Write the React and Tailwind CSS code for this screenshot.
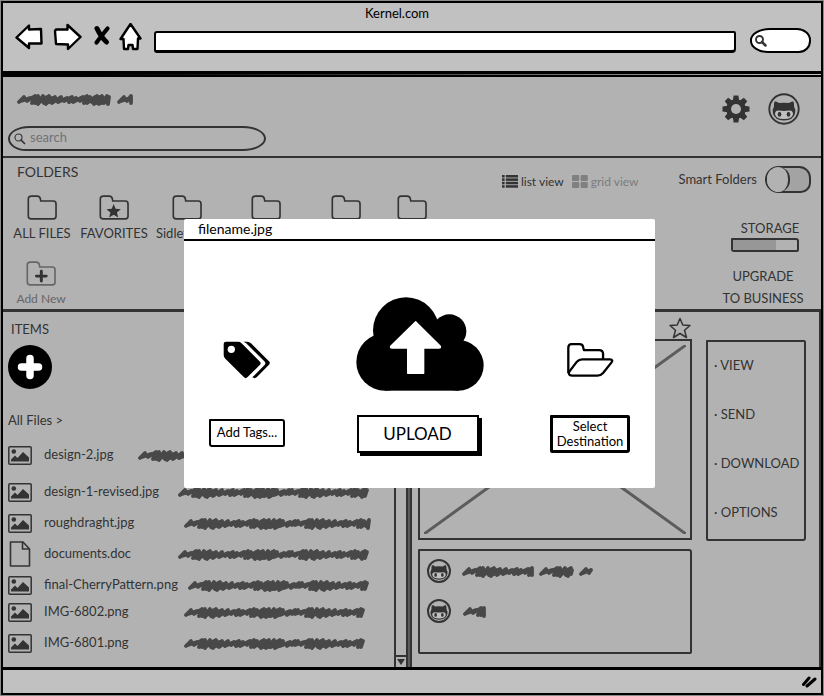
import React from "react";

/* ---------- hand-drawn scribble standing in for text ---------- */

/* Each stroke: distance to the next one, top of the stroke, bottom of the stroke. */
const STROKES = [
  [3, 4, 8], [6, 5, 8], [5, 3, 10], [3, 3, 10], [3, 5, 11], [2, 3, 9], [4, 4, 10], [2, 3, 11], [3, 5, 9], [3, 4, 10],
  [6, 4, 9], [6, 5, 8], [5, 4, 9], [4, 5, 9], [7, 4, 8], [4, 3, 10], [3, 4, 10], [5, 4, 9], [2, 3, 11], [3, 4, 10],
  [2, 3, 11], [3, 5, 10], [2, 3, 10], [4, 4, 11], [2, 3, 10], [3, 4, 9], [7, 5, 9], [5, 4, 8],
];

function scribblePath(from, to) {
  let x = from;
  let i = 0;
  let d = `M${from + 2} 9`;
  while (x < to - 5) {
    const [step, top, bottom] = STROKES[i % STROKES.length];
    x += step;
    const up = Math.min(x + 4, to - 2);
    d += `L${up} ${top}L${Math.min(x + 1, to - 2)} ${bottom}`;
    i += 1;
  }
  return d;
}

function Scribble({ words, className = "" }) {
  const width = words[words.length - 1][1];
  return (
    <svg width={width} height="13" viewBox={`0 0 ${width} 13`} className={`shrink-0 ${className}`} aria-hidden="true">
      {words.map(([a, b]) => (
        <path key={a} d={scribblePath(a, b)} fill="none" stroke="#484848" strokeWidth="3.8" strokeLinejoin="round" strokeLinecap="round" />
      ))}
    </svg>
  );
}

/* ---------- icons ---------- */

function BackArrow() {
  return (
    <svg width="28" height="30" viewBox="0 0 28 30" fill="white" stroke="black" strokeWidth="2.4" strokeLinejoin="round">
      <path d="M1.5 14.5 14 2.5V6.5L26 6 26.500 20.500 14 20.500V25Z" />
    </svg>
  );
}

function ForwardArrow() {
  return (
    <svg width="29" height="30" viewBox="0 0 29 30" fill="white" stroke="black" strokeWidth="2.4" strokeLinejoin="round">
      <path d="M2 8 3 6.500 14.500 6.500V2L27.500 14 15 26V21.500L3 21Z" />
    </svg>
  );
}

function StopIcon() {
  return (
    <svg width="18" height="30" viewBox="0 0 18 30" fill="none" stroke="black" strokeLinecap="round">
      <path d="M4 5.500Q8 14 13.500 19" strokeWidth="5" />
      <path d="M14.500 5.500Q10 11 3.500 19.500" strokeWidth="4.200" />
    </svg>
  );
}

function HomeIcon() {
  return (
    <svg width="23" height="30" viewBox="0 0 23 30" fill="white" stroke="black" strokeWidth="2.400" strokeLinejoin="round">
      <path d="M11.500 1 21.500 15.500H19L18.500 26H14L13.500 22 9.500 22 9 26H5L4.500 16H1.500Z" />
    </svg>
  );
}

function Magnifier({ className, weight }) {
  return (
    <svg width="12" height="12" viewBox="0 0 12 12" className={className} fill="none" stroke="currentColor" strokeWidth={weight} strokeLinecap="round">
      <circle cx="4.500" cy="4.500" r="3.500" />
      <path d="M7 7 10.500 10.500" strokeWidth={weight + 0.6} />
    </svg>
  );
}

function Gear() {
  return (
    <svg width="28" height="28" viewBox="-14 -14 28 28" fill="#333">
      {[0, 45, 90, 135].map((a) => (
        <path key={a} d="M-2.400-13.500H2.400L3.200-8V8L2.400 13.500H-2.400L-3.200 8V-8Z" transform={`rotate(${a})`} />
      ))}
      <circle r="9.800" />
      <circle r="5" fill="#b2b2b2" />
    </svg>
  );
}

function Octocat({ size, ring }) {
  return (
    <svg width={size} height={size} viewBox="0 0 32 32" className="shrink-0">
      <circle cx="16" cy="16" r="14.700" fill="none" stroke="#333" strokeWidth={ring} />
      <path d="M6.500 8.500Q8.500 8 11 10 16 9.500 21 10 23.500 8 25.500 8.500 26.300 11 26 13.500 28 16.500 27 20.500 25.500 27 16 27.500 6.500 27 5 20.500 4 16.500 6 13.500 5.700 11 6.500 8.500Z" fill="#333" />
      <path d="M10.500 17.500Q16 18.300 21.500 17.500 25 17.500 25 21 24.500 26 16 26 7.500 26 7 21 7 17.500 10.500 17.500Z" fill="#c0c0c0" />
      <ellipse cx="11.500" cy="21.300" rx="1.800" ry="2.500" fill="#333" />
      <ellipse cx="20.500" cy="21.300" rx="1.800" ry="2.500" fill="#333" />
    </svg>
  );
}

function Folder({ mark, faded }) {
  return (
    <svg width="30" height="25" viewBox="79 119 92 76" fill="none" className="shrink-0">
      <path
        d="M83 131Q83 122 92 122H110Q118 122 120 130L121 137H160Q168 137 168 146V184Q168 192 160 192H92Q83 192 83 184Z"
        stroke={faded ? "#666" : "#333"}
        strokeWidth="5"
      />
      {mark === "star" && (
        <path d="M124 146 130 161 146 162 134 172 138 188 124 179 110 188 114 172 102 162 118 161Z" fill="#333" />
      )}
      {mark === "plus" && <path d="M111 165H141M126 150V180" stroke="#333" strokeWidth="9" strokeLinecap="round" />}
    </svg>
  );
}

function ImageIcon() {
  return (
    <svg width="24" height="19" viewBox="0 0 24 19" className="shrink-0">
      <rect x="0.800" y="0.800" width="22.400" height="17.400" rx="1" fill="none" stroke="#333" strokeWidth="1.500" />
      <circle cx="5.800" cy="5.500" r="2.300" fill="#333" />
      <path d="M3 15.500V13.500L7 9.500 9.500 12 15 6 21 11.500V15.500Z" fill="#333" />
    </svg>
  );
}

function DocIcon() {
  return (
    <svg width="24" height="26" viewBox="0 0 24 26" className="shrink-0" fill="none" stroke="#333" strokeWidth="1.600" strokeLinejoin="round">
      <path d="M2.500 1H15L21.500 8V25H2.500Z" />
      <path d="M14.500 1V8H21.500" />
    </svg>
  );
}

function ListIcon() {
  return (
    <svg width="16" height="13" viewBox="0 0 16 13" fill="#333">
      {[0, 3.400, 6.800, 10.200].map((y) => (
        <g key={y}>
          <rect x="0" y={y} width="2.600" height="2.500" />
          <rect x="3.800" y={y} width="12.200" height="2.500" />
        </g>
      ))}
    </svg>
  );
}

function GridIcon() {
  return (
    <svg width="16" height="13" viewBox="0 0 16 13" fill="#808080">
      <rect x="0" y="0" width="7.200" height="6" rx="1" />
      <rect x="8.600" y="0" width="7.200" height="6" rx="1" />
      <rect x="0" y="7" width="7.200" height="6" rx="1" />
      <rect x="8.600" y="7" width="7.200" height="6" rx="1" />
    </svg>
  );
}

function CloudUpload() {
  return (
    <svg width="128" height="94" viewBox="499 51 384 282">
      <circle cx="649" cy="151" r="99" />
      <circle cx="779" cy="154" r="51" />
      <circle cx="586" cy="246" r="86" />
      <circle cx="806" cy="256" r="76" />
      <rect x="586" y="170" width="220" height="162" />
      <path d="M678 125 752 199Q754 204 748 204H702V280H654V204H607Q601 204 603 199Z" fill="white" stroke="white" strokeWidth="4" strokeLinejoin="round" />
    </svg>
  );
}

function TagsIcon() {
  return (
    <svg width="48" height="38" viewBox="99 191 144 114" className="ml-[14px]">
      <path d="M108 193H144Q150 193 154 197L210 253Q214 258 210 262L172 300Q167 305 162 300L106 244Q101 239 101 233V200Q101 193 108 193Z" />
      <circle cx="124" cy="216" r="11" fill="white" />
      <path d="M160 193H172Q178 193 183 198L237 252Q242 257 237 262L200 300Q194 305 187 300L223 264Q229 258 223 252L168 197Z" />
    </svg>
  );
}

function OpenFolder() {
  return (
    <svg width="48" height="36" viewBox="257 132 145 108" fill="none" stroke="black" strokeWidth="7" strokeLinejoin="round">
      <path d="M264 226V149Q264 138 274 138H298Q308 138 309 148L311 156H357Q369 156 369 168V184" />
      <path d="M306 184H390Q401 185 394 194L369 225Q362 233 352 233H275Q262 232 267 221L290 191Q296 184 306 184Z" />
    </svg>
  );
}

function StarOutline() {
  return (
    <svg width="22" height="22" viewBox="0 0 22 22" fill="none" stroke="#333" strokeWidth="1.500" strokeLinejoin="round">
      <path d="M11 1.500 13.800 8 21 8.500 15.500 13.300 17.500 20.500 11 16.500 4.500 20.500 6.500 13.300 1 8.500 8.200 8Z" />
    </svg>
  );
}

/* ---------- page parts ---------- */

function BrowserBar() {
  return (
    <header className="h-[71px] border-b-[3px] border-black bg-[#c1c1c1] pr-2.5 pl-3">
      <p className="pr-8 text-center leading-5 text-black">Kernel.com</p>
      <div className="flex h-[30px] items-end">
        <button aria-label="Back"><BackArrow /></button>
        <button aria-label="Forward" className="ml-2.5"><ForwardArrow /></button>
        <button aria-label="Stop" className="ml-[11px]"><StopIcon /></button>
        <button aria-label="Home" className="ml-2"><HomeIcon /></button>
        <input
          aria-label="Address"
          className="ml-3 h-[22px] min-w-0 flex-1 rounded-[3px_2px_4px_3px] border-x-2 border-t-2 border-b-[3px] border-black bg-white px-1 outline-none"
        />
        <label className="ml-3.5 flex h-[25px] w-[61px] items-center rounded-[20px_14px_12px_18px/12px] border-2 border-black bg-white pl-[3px]">
          <Magnifier weight={1.9} className="shrink-0" />
          <input aria-label="Web search" className="w-full min-w-0 bg-transparent outline-none" />
        </label>
      </div>
    </header>
  );
}

function BrandBar() {
  return (
    <section className="flex h-[81px] items-start justify-between border-b-2 border-[#333] pr-[21px] pl-[5px]">
      <div className="pt-4">
        <Scribble className="ml-[9px]" words={[[0, 94], [100, 116]]} />
        <label className="mt-5 flex h-[25px] w-[258px] items-center gap-1 rounded-[22px_24px_24px_18px/13px] border-2 border-[#333] pl-1">
          <Magnifier weight={1.1} className="text-[#333]" />
          <input
            aria-label="Search files"
            placeholder="search"
            className="min-w-0 flex-1 bg-transparent pb-0.5 outline-none placeholder:text-[#717176]"
          />
        </label>
      </div>
      <div className="flex items-center gap-[18px] pt-4">
        <button aria-label="Settings"><Gear /></button>
        <button aria-label="Account"><Octocat size={32} ring={1.9} /></button>
      </div>
    </section>
  );
}

const FOLDERS = [
  { id: "all", label: "ALL FILES", width: "w-[72px]", align: "" },
  { id: "fav", label: "FAVORITES", width: "w-[72px]", mark: "star", align: "" },
  { id: "sidley", label: "Sidley", width: "w-[74px]", align: "self-start pl-1.5" },
  { id: "f4", label: "", width: "w-[84px]", align: "" },
  { id: "f5", label: "", width: "w-[76px]", align: "" },
  { id: "f6", label: "", width: "w-14", align: "" },
];

function FolderSection() {
  return (
    <section className="flex h-[154px] justify-between border-b-[3px] border-[#333]">
      <div className="pl-[3px]">
        <h2 className="pt-1 pl-[11px] text-sm leading-5">FOLDERS</h2>
        <ul className="mt-[13px] flex">
          {FOLDERS.map((f) => (
            <li key={f.id} className={f.width}>
              <button className="flex w-full flex-col items-center gap-[3px] whitespace-nowrap" aria-label={f.label || "Folder"}>
                <Folder mark={f.mark} />
                <span className={`h-5 leading-5 ${f.align}`}>{f.label}</span>
              </button>
            </li>
          ))}
        </ul>
        <button className="mt-[18px] flex w-[70px] flex-col items-center gap-[3px] text-xs leading-5 text-[#666]">
          <Folder mark="plus" faded />
          Add New
        </button>
      </div>
      <div className="flex flex-col items-end pr-2.5 text-xs">
        <div className="flex items-center pt-2">
          <button className="flex items-center gap-[3px] pt-1"><ListIcon />list view</button>
          <button className="ml-2 flex items-center gap-[3px] pt-1 text-[#7c7c7c]"><GridIcon />grid view</button>
          <label className="ml-10 flex items-center gap-2 text-[13px]">
            Smart Folders
            <span className="relative flex h-[27px] w-[46px] rounded-[16px_14px_12px_16px] border-2 border-[#333] bg-[#a3a3a3]">
              <input type="checkbox" className="absolute inset-0 opacity-0" />
              <span className="-my-px h-[25px] w-[23px] rounded-full border-r-2 border-[#333] bg-[#b2b2b2]" />
            </span>
          </label>
        </div>
        <div className="mt-[25px] mr-0.5 flex w-[88px] flex-col items-center text-[13px] leading-5">
          <span className="pl-2.5">STORAGE</span>
          <div className="flex h-[14px] w-[68px] rounded-[1px_3px_2px_3px] border-2 border-[#333]">
            <span className="w-2/3 bg-[#979797]" />
          </div>
          <button className="mt-3.5 mr-1 flex flex-col items-center gap-0.5 leading-5 whitespace-nowrap">
            <span>UPGRADE</span>
            <span>TO BUSINESS</span>
          </button>
        </div>
      </div>
    </section>
  );
}

const FILES = [
  { name: "design-2.jpg", len: 192, gap: "", end: "mr-[41px]" },
  { name: "design-1-revised.jpg", len: 191, gap: "mt-[11px]", end: "mr-0.5" },
  { name: "roughdraght.jpg", len: 187, gap: "mt-[5px]", end: "" },
  { name: "documents.doc", len: 191, gap: "mt-[5px]", end: "mr-0.5", doc: true },
  { name: "final-CherryPattern.png", len: 181, gap: "mt-[5px]", end: "mr-0.5" },
  { name: "IMG-6802.png", len: 181, gap: "mt-px", end: "mr-1.5" },
  { name: "IMG-6801.png", len: 181, gap: "mt-[5px]", end: "mr-1.5" },
];

function ItemsPanel() {
  return (
    <section className="pr-[23px] pl-[5px]">
      <h2 className="pt-[7px] pl-[3px] leading-5">ITEMS</h2>
      <button aria-label="Add item" className="mt-1.5 flex size-[44px] items-center justify-center rounded-full bg-black">
        <svg width="26" height="26" viewBox="0 0 26 26" stroke="white" strokeWidth="7.500" strokeLinecap="round">
          <path d="M4.500 13H21.500M13 4.500V21.500" />
        </svg>
      </button>
      <a href="#all" className="mt-[21px] block leading-5">All Files &gt;</a>
      <ul className="mt-3">
        {FILES.map((f) => (
          <li key={f.name} className={`flex h-[26px] items-center ${f.gap}`}>
            {f.doc ? <DocIcon /> : <ImageIcon />}
            <span className="ml-3 flex-1 whitespace-nowrap">{f.name}</span>
            <Scribble words={[[0, f.len]]} className={f.end} />
          </li>
        ))}
      </ul>
    </section>
  );
}

function ScrollTrack() {
  return (
    <div className="flex border-r-2 border-[#333] bg-[#5c5c5c] pr-0.5">
      <div className="flex w-[14px] flex-col justify-end border-r-2 border-l-2 border-[#333] bg-[#b2b2b2]">
        <button aria-label="Scroll down" className="flex h-[12px] items-center justify-center border-t-2 border-[#333]">
          <svg width="8" height="6" viewBox="0 0 8 6" fill="#333"><path d="M0 0H8L4 6Z" /></svg>
        </button>
      </div>
    </div>
  );
}

function DetailPanel() {
  return (
    <section className="flex border-r-2 border-[#333] pr-[13px] pl-1.5">
      <div className="flex min-w-0 flex-1 flex-col">
        <button aria-label="Star" className="mt-[5px] mr-px self-end"><StarOutline /></button>
        <div className="h-[201px] border-2 border-[#333] p-1">
          <svg width="100%" height="100%" viewBox="0 0 262 189" preserveAspectRatio="none" stroke="#5c5c5c" strokeWidth="3">
            <path d="M0 0 262 189M262 0 0 189" />
          </svg>
        </div>
        <ul className="mt-[9px] flex h-[105px] flex-col gap-4 rounded-[1px_3px_2px_2px] border-2 border-[#333] pt-2 pl-[7px]">
          <li className="flex items-center gap-[11px]"><Octocat size={24} ring={2.6} /><Scribble words={[[0, 72], [77, 112], [117, 131]]} /></li>
          <li className="flex items-center gap-3"><Octocat size={24} ring={2.6} /><Scribble words={[[0, 23]]} /></li>
        </ul>
      </div>
      <nav className="mt-7 ml-3.5 flex h-[201px] w-[100px] shrink-0 flex-col gap-[29px] rounded-[1px_2px_3px_2px] border-2 border-[#333] pt-[13px] pl-1.5 leading-5">
        {["VIEW", "SEND", "DOWNLOAD", "OPTIONS"].map((t) => (
          <a key={t} href={`#${t.toLowerCase()}`} className="whitespace-nowrap">· {t}</a>
        ))}
      </nav>
    </section>
  );
}

function UploadDialog() {
  return (
    <div className="absolute inset-0 flex items-start justify-center pt-[219px] pl-[15px]">
      <div role="dialog" aria-label="filename.jpg" className="w-[471px] rounded-[2px] bg-white pb-[35px] text-black">
        <h1 className="border-b-2 border-black pl-3.5 text-sm leading-5">filename.jpg</h1>
        <div className="flex items-end justify-between px-[25px] pt-14">
          <div className="mb-1.5 flex w-20 flex-col items-start gap-10">
            <TagsIcon />
            <button className="h-[28px] w-[76px] rounded-[1px_3px_2px_3px] border-2 border-black text-[13px] whitespace-nowrap">Add Tags...</button>
          </div>
          <div className="flex flex-col items-center gap-6">
            <CloudUpload />
            <button className="ml-px h-[38px] w-[122px] self-start border-2 border-black text-[17px] shadow-[3px_3px_0_black]">UPLOAD</button>
          </div>
          <div className="flex flex-col items-center gap-[37px]">
            <OpenFolder />
            <button className="h-[38px] w-20 rounded-[1px_2px_3px_2px] border-[3px] border-black text-[13px] leading-[15px]">Select Destination</button>
          </div>
        </div>
      </div>
    </div>
  );
}

export default function App() {
  return (
    <div className="relative flex min-h-screen flex-col bg-[#8a8a8a] p-px font-['Lato','Open_Sans',sans-serif] text-[13px] text-[#333]">
      <div className="flex flex-1 flex-col border-2 border-black">
        <BrowserBar />
        <div className="h-px bg-linear-to-r from-black to-[#c1c1c1]" />
        <main className="flex flex-1 flex-col border-t-2 border-black bg-[#b2b2b2]">
          <BrandBar />
          <FolderSection />
          <div className="grid flex-1 grid-cols-[391fr_18px_409fr]">
            <ItemsPanel />
            <ScrollTrack />
            <DetailPanel />
          </div>
        </main>
        <footer className="flex h-[26px] items-center justify-end border-t-[3px] border-black bg-[#c1c1c1] pr-1">
          <svg width="16" height="13" viewBox="0 0 16 13" stroke="black" strokeWidth="3" strokeLinecap="round">
            <path d="M2.500 9.500 8 3M6 11 14 4" />
          </svg>
        </footer>
      </div>
      <UploadDialog />
    </div>
  );
}
